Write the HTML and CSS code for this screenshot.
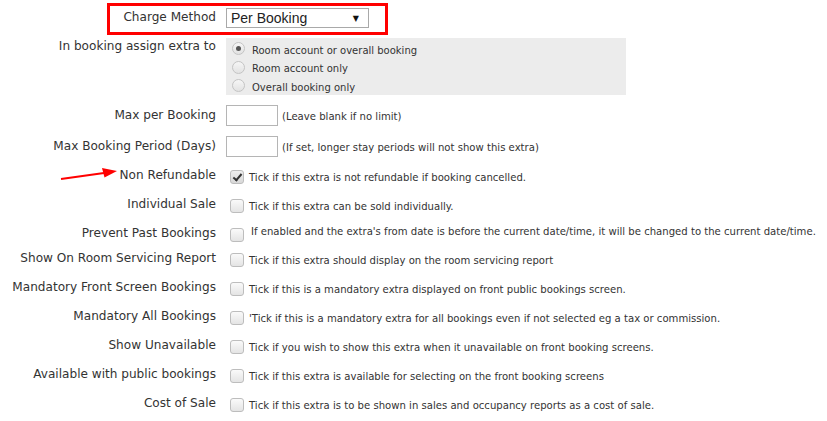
FILE: index.html
```html
<!DOCTYPE html>
<html lang="en">
<head>
  <meta charset="UTF-8">
  <title>Extra Settings</title>
  <link rel="stylesheet" href="styles.css">
</head>
<body>
  <div class="form">
    <div class="row row-charge">
      <div class="highlight"></div>
      <label class="label">Charge Method</label>
      <div class="field">
        <div class="select">
          <span>Per Booking</span>
          <span class="caret">&#9660;</span>
        </div>
      </div>
    </div>

    <div class="row row-assign">
      <label class="label">In booking assign extra to</label>
      <div class="field">
        <div class="radios">
          <div class="radio-line"><span class="radio checked"></span>Room account or overall booking</div>
          <div class="radio-line"><span class="radio"></span>Room account only</div>
          <div class="radio-line"><span class="radio"></span>Overall booking only</div>
        </div>
      </div>
    </div>

    <div class="row row-input">
      <label class="label">Max per Booking</label>
      <div class="field field-input">
        <div class="textbox"></div>
        <span class="hint">(Leave blank if no limit)</span>
      </div>
    </div>

    <div class="row row-input">
      <label class="label">Max Booking Period (Days)</label>
      <div class="field field-input">
        <div class="textbox"></div>
        <span class="hint">(If set, longer stay periods will not show this extra)</span>
      </div>
    </div>

    <div class="row row-check">
      <svg class="pointer" width="60" height="14" viewBox="0 0 60 14">
        <path d="M1 12 L44 6" stroke="#f00" stroke-width="2.2" fill="none"/>
        <path d="M57 4 L42 1 L44.5 10.5 Z" fill="#f00"/>
      </svg>
      <label class="label">Non Refundable</label>
      <div class="field">
        <span class="check checked"></span>
        <span class="hint">Tick if this extra is not refundable if booking cancelled.</span>
      </div>
    </div>

    <div class="row row-check">
      <label class="label">Individual Sale</label>
      <div class="field">
        <span class="check"></span>
        <span class="hint">Tick if this extra can be sold individually.</span>
      </div>
    </div>

    <div class="row row-check row-tight">
      <label class="label">Prevent Past Bookings</label>
      <div class="field">
        <span class="check"></span>
        <span class="hint hint-high">If enabled and the extra's from date is before the current date/time, it will be changed to the current date/time.</span>
      </div>
    </div>

    <div class="row row-check">
      <label class="label">Show On Room Servicing Report</label>
      <div class="field">
        <span class="check"></span>
        <span class="hint">Tick if this extra should display on the room servicing report</span>
      </div>
    </div>

    <div class="row row-check">
      <label class="label">Mandatory Front Screen Bookings</label>
      <div class="field">
        <span class="check"></span>
        <span class="hint">Tick if this is a mandatory extra displayed on front public bookings screen.</span>
      </div>
    </div>

    <div class="row row-check">
      <label class="label">Mandatory All Bookings</label>
      <div class="field">
        <span class="check"></span>
        <span class="hint">'Tick if this is a mandatory extra for all bookings even if not selected eg a tax or commission.</span>
      </div>
    </div>

    <div class="row row-check">
      <label class="label">Show Unavailable</label>
      <div class="field">
        <span class="check"></span>
        <span class="hint">Tick if you wish to show this extra when it unavailable on front booking screens.</span>
      </div>
    </div>

    <div class="row row-check">
      <label class="label">Available with public bookings</label>
      <div class="field">
        <span class="check"></span>
        <span class="hint">Tick if this extra is available for selecting on the front booking screens</span>
      </div>
    </div>

    <div class="row row-check">
      <label class="label">Cost of Sale</label>
      <div class="field">
        <span class="check"></span>
        <span class="hint">Tick if this extra is to be shown in sales and occupancy reports as a cost of sale.</span>
      </div>
    </div>
  </div>
</body>
</html>
```

FILE: styles.css
```css
html, body {
  margin: 0;
  padding: 0;
  background: #fff;
}
body {
  font-family: 'DejaVu Sans', Verdana, sans-serif;
  color: #333;
  width: 827px;
  height: 421px;
  overflow: hidden;
}
.form {
  display: flex;
  flex-direction: column;
  padding-top: 8px;
}
.row {
  position: relative;
  display: grid;
  grid-template-columns: 216px 1fr;
  column-gap: 10px;
}
.label {
  text-align: right;
  font-size: 12.1px;
  line-height: 17px;
  color: #333;
  white-space: nowrap;
}
.field {
  display: flex;
  align-items: flex-start;
  min-width: 0;
}

/* charge method */
.row-charge {
  height: 30px;
}
.row-charge .label {
  padding-top: 1px;
}
.highlight {
  position: absolute;
  left: 107px;
  top: -5px;
  width: 275px;
  height: 26px;
  border: 3px solid #f00;
}
.select {
  height: 18px;
  border: 1px solid #a9a9a9;
  display: flex;
  align-items: center;
  justify-content: space-between;
  padding: 0 9px 0 4px;
  font-family: 'Liberation Sans', Arial, sans-serif;
  font-size: 14px;
  color: #222;
  width: 128px;
}
.caret {
  font-family: 'DejaVu Sans', sans-serif;
  font-size: 8px;
  color: #111;
}

/* assign radios */
.row-assign {
  height: 67px;
}
.radios {
  background: #ececec;
  width: 400px;
  height: 57px;
  padding: 3px 0 0 5px;
  box-sizing: border-box;
}
.radio-line {
  display: flex;
  align-items: center;
  height: 18.5px;
  font-size: 10px;
  color: #333;
}
.radio {
  width: 11px;
  height: 11px;
  border-radius: 50%;
  border: 1px solid #c4c4c4;
  background: linear-gradient(#f6f6f6, #e2e2e2);
  margin: 0 7px 3px 1px;
  position: relative;
}
.radio.checked::after {
  content: '';
  position: absolute;
  left: 3px;
  top: 3px;
  width: 5px;
  height: 5px;
  border-radius: 50%;
  background: #555;
}

/* text inputs */
.row-input {
  height: 31px;
}
.row-input .label {
  padding-top: 2px;
}
.textbox {
  width: 50px;
  height: 19px;
  border: 1px solid #b5b5b5;
  background: #fff;
  margin-right: 4px;
}
.hint {
  font-size: 10.1px;
  color: #333;
  white-space: nowrap;
  padding-top: 6px;
}

/* checkbox rows */
.row-check {
  height: 29px;
}
.row-tight {
  height: 25px;
}
.row-check .field {
  padding-left: 4px;
}
.check {
  width: 12px;
  height: 12px;
  flex: none;
  border: 1px solid #bdbdbd;
  border-radius: 3px;
  background: linear-gradient(#fafafa, #e4e4e4);
  margin: 3px 5px 0 0;
  position: relative;
}
.check.checked {
  background: linear-gradient(#eee, #d8d8d8);
}
.check.checked::after {
  content: '';
  position: absolute;
  left: 4px;
  top: 1px;
  width: 3px;
  height: 7px;
  border: solid #333;
  border-width: 0 2px 2px 0;
  transform: rotate(40deg);
}
.row-check .hint {
  padding-top: 5px;
}
.row-check .hint-high {
  padding-top: 1px;
  padding-left: 2px;
}
.pointer {
  position: absolute;
  left: 60px;
  top: 0;
}
```
